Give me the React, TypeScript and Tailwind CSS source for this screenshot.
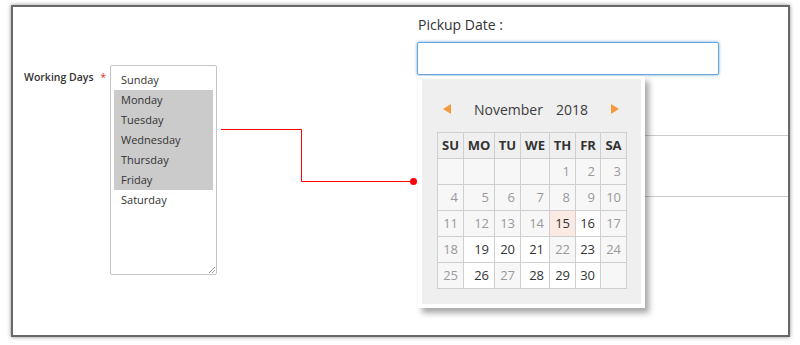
import React from 'react';

type Cell = { d?: number; s?: 'off' | 'on' | 'today' };

const DAYS = ['Sunday', 'Monday', 'Tuesday', 'Wednesday', 'Thursday', 'Friday', 'Saturday'];
const SELECTED = ['Monday', 'Tuesday', 'Wednesday', 'Thursday', 'Friday'];
const HEADS = ['SU', 'MO', 'TU', 'WE', 'TH', 'FR', 'SA'];

// days you can still pick (white cells)
const OPEN = [16, 19, 20, 21, 23, 26, 28, 29, 30];

const buildCells = (): Cell[] => {
  const cells: Cell[] = [{}, {}, {}, {}];
  for (let d = 1; d <= 30; d++) {
    cells.push({ d, s: d === 15 ? 'today' : OPEN.includes(d) ? 'on' : 'off' });
  }
  cells.push({});
  return cells;
};

const cellClass = (c: Cell) => {
  if (c.s === 'today') return 'bg-[#fbeae4] text-[#333]';
  if (c.s === 'on') return 'bg-white text-[#333]';
  return 'bg-[#f7f7f7] text-[#9a9a9a]';
};

const DatePopup: React.FC = () => (
  <div className="absolute left-[1px] top-[34px] w-[227px] bg-white px-[4px] pt-[3px] pb-[4px] shadow-[4px_5px_6px_rgba(0,0,0,0.35)] z-10">
    <div className="bg-[#efefef] h-[225px] pt-[20px]">
      <div className="flex items-center h-[20px] pl-[21px] pr-[22px]">
        <svg width="8" height="10" viewBox="0 0 8 10">
          <polygon points="8,0 8,10 0,5" fill="#f39a3c" />
        </svg>
        <div className="flex-1 text-center text-[14px] text-[#3d3d3d]">
          November<span className="ml-[13px]">2018</span>
        </div>
        <svg width="8" height="10" viewBox="0 0 8 10">
          <polygon points="0,0 0,10 8,5" fill="#f39a3c" />
        </svg>
      </div>
      <div className="mt-[13px] ml-[15px] w-[190px] grid grid-cols-[25px_30px_25px_28px_25px_24px_25px] auto-rows-[25px] gap-px p-px bg-[#cfcfcf]">
        {HEADS.map(h => (
          <div key={h} className="bg-[#efefef] flex items-center justify-center text-[13px] font-bold text-[#333]">
            {h}
          </div>
        ))}
        {buildCells().map((c, i) => (
          <div key={i} className={`flex items-center justify-end pr-[5px] text-[13px] ${cellClass(c)}`}>
            {c.d ?? ''}
          </div>
        ))}
      </div>
    </div>
  </div>
);

export default function App() {
  return (
    <div
      className="w-[800px] h-[345px] bg-white pt-[5px] pl-[11px]"
      style={{ fontFamily: '"Open Sans", "Noto Sans", sans-serif' }}
    >
      <div className="relative w-[779px] h-[332px] border-2 border-[#686868] bg-white flex shadow-[0_0_4px_rgba(0,0,0,0.45)]">
        {/* Working days multi select */}
        <div className="ml-[11px] mt-[58px] flex items-start">
          <div className="w-[86px] pt-[4px] flex items-center whitespace-nowrap text-[10.5px] leading-[16px] font-semibold text-[#333]">
            Working Days
            <span className="ml-[7px] text-[10px] text-[#e02b27] font-normal">*</span>
          </div>
          <div className="relative w-[107px] h-[210px] border border-[#c4c4c4] rounded-[2px] p-[3px] pt-[4px]">
            {DAYS.map(d => (
              <div
                key={d}
                className={`h-[20px] leading-[20px] pl-[7px] text-[11px] text-[#333] ${SELECTED.includes(d) ? 'bg-[#cbcbcb]' : ''}`}
              >
                {d}
              </div>
            ))}
            <svg className="absolute right-[1px] bottom-[1px]" width="7" height="7" viewBox="0 0 7 7">
              <path d="M1 7 L7 1 M4 7 L7 4" stroke="#9a9a9a" strokeWidth="1" />
            </svg>
          </div>
        </div>

        {/* Pickup date */}
        <div className="ml-[200px] mt-[8px] flex-1 flex flex-col">
          <div className="text-[14px] leading-[20px] text-[#333] pl-[1px]">Pickup Date :</div>
          <div className="relative mt-[7px]">
            <div className="w-[302px] h-[33px] border border-[#6aa6dc] rounded-[2px] bg-white shadow-[0_0_3px_rgba(80,150,215,0.9)]" />
            <DatePopup />
          </div>
          <div className="mt-[60px] ml-[4px] border-t border-[#cacaca]" />
          <div className="mt-[60px] ml-[4px] border-t border-[#cacaca]" />
        </div>

        {/* annotation connector */}
        <svg
          className="absolute left-0 top-0 pointer-events-none z-20"
          width="775"
          height="328"
          viewBox="13 7 775 328"
        >
          <path d="M221 129.5 H301.5 V181.5 H411" fill="none" stroke="#ff0000" strokeWidth="1" />
          <circle cx="413.5" cy="181.5" r="3.5" fill="#ff0000" />
        </svg>
      </div>
    </div>
  );
}
